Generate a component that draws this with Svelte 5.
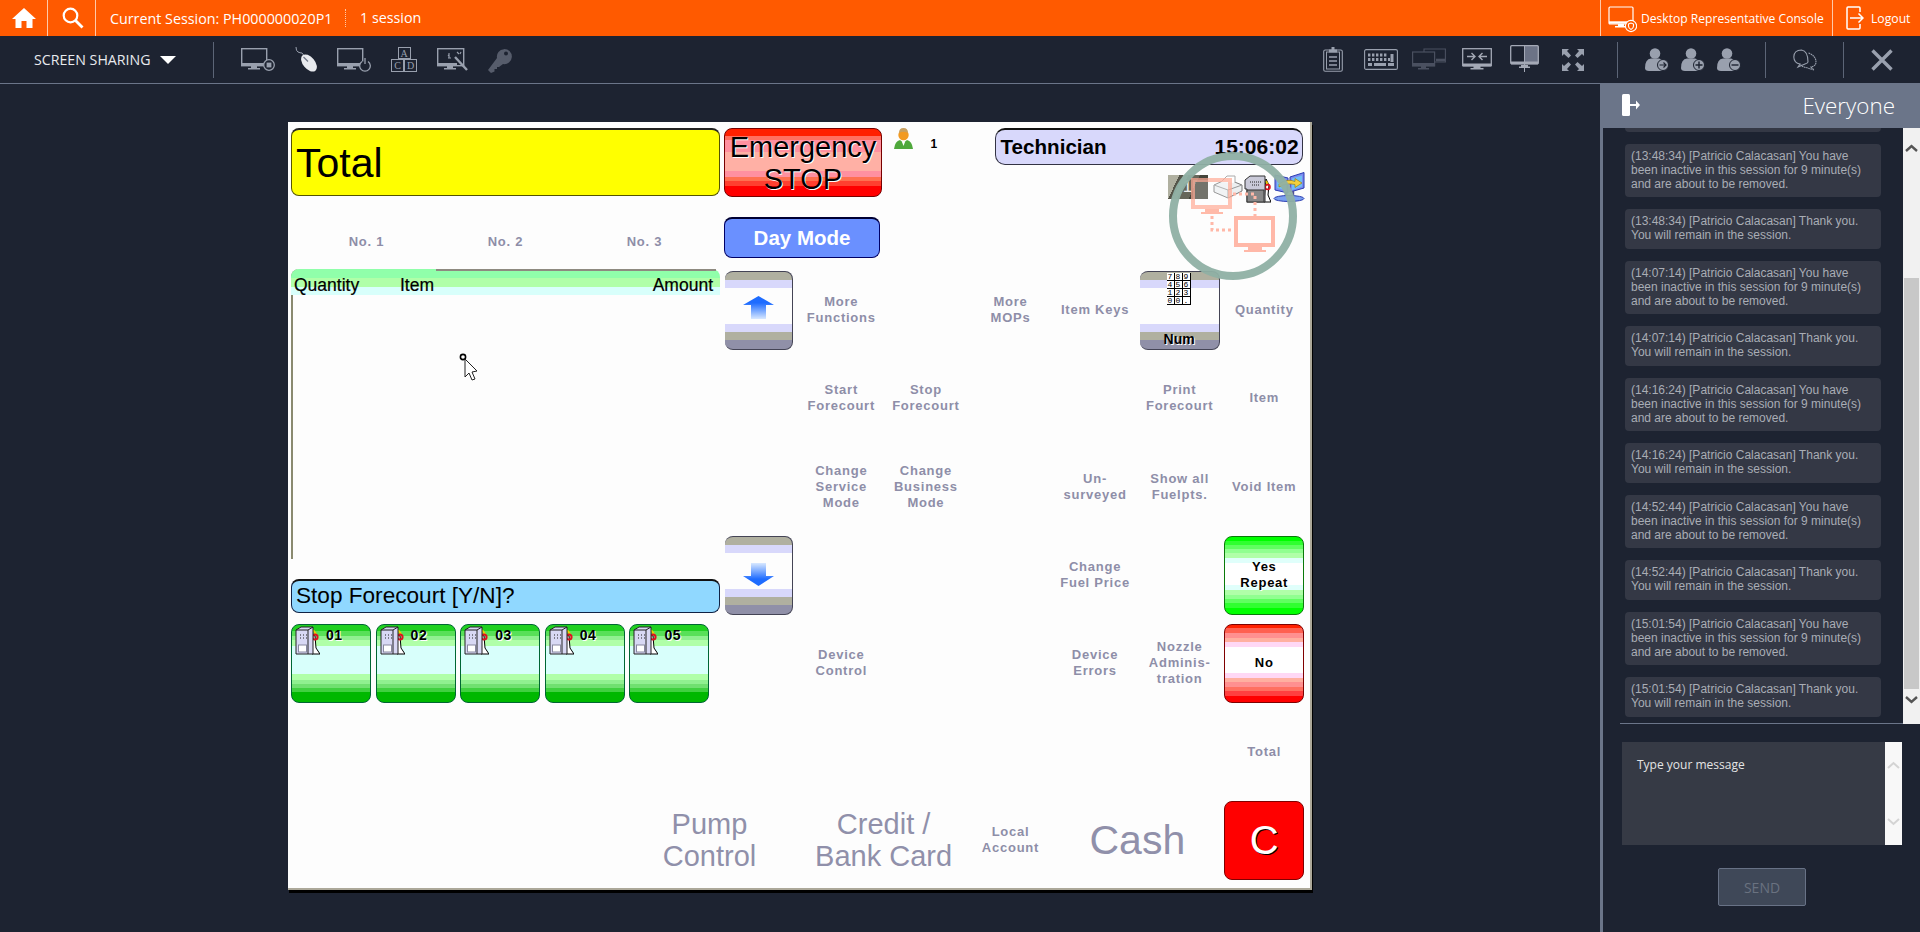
<script>
  const pumps = ['01', '02', '03', '04', '05'];
  const pad = ['7', '8', '9', '4', '5', '6', '1', '2', '3', '0', '0', '.'];

  // col 6..11 are the six key columns, row 5..11 the seven key rows
  const labels = [
    { text: 'More\nFunctions', col: 6, row: 5 },
    { text: 'More\nMOPs', col: 8, row: 5 },
    { text: 'Item Keys', col: 9, row: 5 },
    { text: 'Quantity', col: 11, row: 5 },
    { text: 'Start\nForecourt', col: 6, row: 6 },
    { text: 'Stop\nForecourt', col: 7, row: 6 },
    { text: 'Print\nForecourt', col: 10, row: 6 },
    { text: 'Item', col: 11, row: 6 },
    { text: 'Change\nService\nMode', col: 6, row: 7 },
    { text: 'Change\nBusiness\nMode', col: 7, row: 7 },
    { text: 'Un-\nsurveyed', col: 9, row: 7 },
    { text: 'Show all\nFuelpts.', col: 10, row: 7 },
    { text: 'Void Item', col: 11, row: 7 },
    { text: 'Change\nFuel Price', col: 9, row: 8 },
    { text: 'Device\nControl', col: 6, row: 9 },
    { text: 'Device\nErrors', col: 9, row: 9 },
    { text: 'Nozzle\nAdminis-\ntration', col: 10, row: 9 },
    { text: 'Total', col: 11, row: 10 },
    { text: 'Local\nAccount', col: 8, row: 11 }
  ];

  const messages = [
    ['13:48:34', 'long'], ['13:48:34', 'short'],
    ['14:07:14', 'long'], ['14:07:14', 'short'],
    ['14:16:24', 'long'], ['14:16:24', 'short'],
    ['14:52:44', 'long'], ['14:52:44', 'short'],
    ['15:01:54', 'long'], ['15:01:54', 'short']
  ];
</script>

<div class="app">
  <header class="topbar">
    <div class="cell home">
      <svg width="24" height="22" viewBox="0 0 24 22"><path d="M12 1 L24 12 H20.5 V21 H14.5 V14 H9.5 V21 H3.5 V12 H0 Z" fill="#fff"/></svg>
    </div>
    <div class="cell search">
      <svg width="22" height="22" viewBox="0 0 22 22" fill="none" stroke="#fff"><circle cx="8.5" cy="8.5" r="6.8" stroke-width="2.2"/><path d="M13.5 13.5 L20.5 20.5" stroke-width="2.8"/></svg>
    </div>
    <span class="session">Current Session: PH000000020P1</span>
    <span class="sessions">1 session</span>
    <div class="cell console">
      <svg width="29" height="30" viewBox="0 0 29 30" fill="none" stroke="#fff"><rect x="1" y="4" width="24" height="17" rx="1" stroke-width="1.2"/><path d="M1 19.5 H20" stroke-width="2.4"/><path d="M10 21 h6 v2 h3 v1.5 H7 V23 h3z" fill="#fff" stroke="none"/><circle cx="23" cy="23" r="5.6" fill="#ff5a00" stroke-width="1.1"/><path d="M20.5 21 l2.5-1 2.5 1 v2 q0 2.4-2.5 3.4 q-2.5-1-2.5-3.4z" fill="none" stroke-width="1.1"/></svg>
      <span>Desktop Representative Console</span>
    </div>
    <div class="cell logout">
      <svg width="18" height="24" viewBox="0 0 18 24" fill="none" stroke="#fff" stroke-width="1.5"><path d="M14 6 V2 Q14 1 13 1 H2 Q1 1 1 2 V22 Q1 23 2 23 H13 Q14 23 14 22 V18"/><path d="M4 12 H17 M12.5 7.5 L17 12 L12.5 16.5"/></svg>
      <span>Logout</span>
    </div>
  </header>

  <nav class="toolbar">
    <span class="sharing">SCREEN SHARING</span>
    <span class="caret"></span>
    <span class="vline"></span>
    <div class="tools tools-left">
      <svg width="34" height="24" viewBox="0 0 34 24" fill="none" stroke="#99a0ae"><rect x=".7" y=".7" width="25" height="17" stroke-width="1.4"/><path d="M1 16.5 H26" stroke-width="3"/><path d="M10 18 h6 v2 h3 v1.5 H7 V20 h3z" fill="#99a0ae" stroke="none"/><circle cx="28" cy="17" r="5.3" fill="#1d2331" stroke-width="1.3"/><rect x="25.6" y="14.6" width="4.8" height="4.8" fill="#99a0ae" stroke="none"/></svg>
      <svg width="22" height="25" viewBox="0 0 22 25" fill="none"><path d="M1 0 Q1 4 3 5 T7 6 Q8 7 8.5 8" stroke="#99a0ae" stroke-width="1"/><ellipse cx="14" cy="16" rx="6" ry="10" transform="rotate(-40 14 16)" fill="#e8eaee"/><path d="M8.5 10 L13 14.5" stroke="#707686" stroke-width="1.2"/></svg>
      <svg width="34" height="24" viewBox="0 0 34 24" fill="none" stroke="#99a0ae"><rect x=".7" y=".7" width="25" height="17" stroke-width="1.4"/><path d="M1 16.5 H26" stroke-width="3"/><path d="M10 18 h6 v2 h3 v1.5 H7 V20 h3z" fill="#99a0ae" stroke="none"/><path d="M25 13.5 A5.3 5.3 0 1 0 31 13.5" fill="#1d2331" stroke-width="1.3"/><path d="M28 10 V16" stroke-width="1.3"/></svg>
      <div class="blocks"><span class="a">A</span><span>C</span><span>D</span></div>
      <svg width="31" height="24" viewBox="0 0 31 24" fill="none" stroke="#99a0ae"><rect x=".7" y=".7" width="26" height="17" stroke-width="1.4"/><path d="M1 16.5 H20" stroke-width="3"/><path d="M10 18 h6 v2 h3 v1.5 H7 V20 h3z" fill="#99a0ae" stroke="none"/><path d="M18 9 L30 22" stroke-width="2.4"/><path d="M11 7 l1.5 1.5 M14 10 l-3 0 M12 5 v5 M20 4 l2 2 M24 4 l-1 2" stroke-width="1.1"/></svg>
      <svg width="26" height="26" viewBox="0 0 26 26"><path d="M9 11 A7.5 7.5 0 1 1 15 17 L11 20 H9 V22 H6.5 V24.5 L3 26 L0 23 Z" fill="#565c6b"/><circle cx="18" cy="6.5" r="2" fill="#1d2331"/></svg>
    </div>
    <div class="tools tools-right">
      <svg class="t-clip" width="20" height="25" viewBox="0 0 20 25" fill="none" stroke="#99a0ae"><rect x=".7" y="3" width="18.6" height="21.3" rx="1.5" stroke-width="1.1"/><rect x="3.5" y="5" width="13" height="17" stroke-width="1"/><path d="M6 2.5 h8 v3 H6z M8.5 0 h3 v3 h-3z" fill="#99a0ae" stroke="none"/><path d="M6 10 H14 M6 14 H14 M6 18 H14" stroke-width="1.4"/></svg>
      <svg class="t-keys" width="34" height="21" viewBox="0 0 34 21" fill="none" stroke="#99a0ae"><rect x=".6" y=".6" width="32.8" height="19.8" rx="1.5" stroke-width="1.1"/><path d="M4 6 H24" stroke-width="3" stroke-dasharray="2.4 1.6"/><path d="M4 10.5 H26" stroke-width="3" stroke-dasharray="2.4 1.6"/><path d="M10 15.5 H22" stroke-width="3"/><path d="M4 15.5 H8 M24 15.5 H30 M28 5 V13" stroke-width="3"/></svg>
      <svg class="t-dual" width="34" height="23" viewBox="0 0 34 23" fill="none" stroke="#4a5060"><path d="M12 4 V1 H33.4 V14 H23" stroke-width="1.1"/><path d="M24 12 H33" stroke-width="2.6"/><rect x=".6" y="4" width="22" height="14" stroke-width="1.2"/><path d="M1 16.5 H22" stroke-width="3"/><path d="M9 18 h5 v2 h3 v1.5 H6 V20 h3z" fill="#4a5060" stroke="none"/></svg>
      <svg class="t-join" width="30" height="23" viewBox="0 0 30 23" fill="none" stroke="#a4a9b6"><rect x=".7" y=".7" width="28.6" height="17" stroke-width="1.3"/><path d="M1 17 H29" stroke-width="3"/><path d="M11.5 18 h7 v2 h3 v1.5 H8.5 V20 h3z" fill="#a4a9b6" stroke="none"/><path d="M5 8.5 H13 M9.5 5 L13 8.5 L9.5 12 M25 8.5 H17 M20.5 5 L17 8.5 L20.5 12" stroke-width="1.4"/></svg>
      <svg class="t-half" width="29" height="27" viewBox="0 0 29 27" fill="none" stroke="#a4a9b6"><rect x="14.5" y="1" width="14" height="18" fill="#6c7386" stroke="none"/><rect x=".7" y=".7" width="27.6" height="18" rx="1" stroke-width="1.3"/><path d="M1 18 H28" stroke-width="3"/><path d="M14.5 0 V27" stroke-width="1"/><path d="M11 20 h7 v1.5 h2 v1.5 H9 v-1.5 h2z" fill="#a4a9b6" stroke="none"/></svg>
      <svg class="t-full" width="22" height="22" viewBox="0 0 22 22" fill="#99a0ae"><path d="M0 0 H7 L5 2 L9 6.5 L6.5 9 L2 5 L0 7Z M22 0 H15 L17 2 L13 6.5 L15.5 9 L20 5 L22 7Z M0 22 H7 L5 20 L9 15.5 L6.5 13 L2 17 L0 15Z M22 22 H15 L17 20 L13 15.5 L15.5 13 L20 17 L22 15Z"/></svg>
      <span class="vline t-line1"></span>
      <svg class="t-u1" width="24" height="23" viewBox="0 0 24 23" fill="#99a0ae"><circle cx="10" cy="5.5" r="5.3"/><path d="M0 20 Q0 11 6 10.5 H14 Q19 11 19 20 L17 23 H4 Q0 23 0 20Z"/><circle cx="18" cy="17" r="5.5" fill="#99a0ae" stroke="#1d2331" stroke-width="1"/><path d="M14.5 17 H21 M18.5 14.5 L21 17 L18.5 19.5" stroke="#1d2331" fill="none" stroke-width="1.2"/></svg>
      <svg class="t-u2" width="24" height="23" viewBox="0 0 24 23" fill="#99a0ae"><circle cx="10" cy="5.5" r="5.3"/><path d="M0 20 Q0 11 6 10.5 H14 Q19 11 19 20 L17 23 H4 Q0 23 0 20Z"/><circle cx="18" cy="17" r="5.5" fill="#99a0ae" stroke="#1d2331" stroke-width="1"/><path d="M14.5 17 H21.5 M18 13.5 V20.5" stroke="#1d2331" fill="none" stroke-width="1.4"/></svg>
      <svg class="t-u3" width="24" height="23" viewBox="0 0 24 23" fill="#99a0ae"><circle cx="10" cy="5.5" r="5.3"/><path d="M0 20 Q0 11 6 10.5 H14 Q19 11 19 20 L17 23 H4 Q0 23 0 20Z"/><circle cx="18" cy="17" r="5.5" fill="#99a0ae" stroke="#1d2331" stroke-width="1"/><path d="M14.5 17 H21.5" stroke="#1d2331" fill="none" stroke-width="1.4"/></svg>
      <span class="vline t-line2"></span>
      <svg class="t-chat" width="24" height="22" viewBox="0 0 24 22" fill="none" stroke="#99a0ae" stroke-width="1.1"><path d="M15 13 Q15 2 8.5 1 Q1 1 .8 8 Q1 14 7 15 L5 18 L12 15 Q15 14 15 13Z"/><path d="M15.5 4 Q23 7 23 13 Q23 17 18 18 L21 21 L13 18.5 Q9 18 7.5 15.5" stroke-dasharray="1.6 .6"/></svg>
      <span class="vline t-line3"></span>
      <svg class="t-x" width="22" height="22" viewBox="0 0 22 22" stroke="#99a0ae" stroke-width="3.4"><path d="M1.5 1.5 L20.5 20.5 M20.5 1.5 L1.5 20.5"/></svg>
    </div>
  </nav>

  <main class="main">
    <section class="stage">
      <div class="screen">
        <div class="pos-left">
          <div class="total">Total</div>
          <div class="numbers"><span>No. 1</span><span>No. 2</span><span>No. 3</span></div>
          <div class="list">
            <div class="list-head"><span class="q">Quantity</span><span class="i">Item</span><span class="am">Amount</span></div>
          </div>
          <div class="status">Stop Forecourt [Y/N]?</div>
          <div class="pumps">
            {#each pumps as p}
              <div class="pump">
                <svg width="25" height="29" viewBox="0 0 25 29"><path d="M17 8 L20 10 L21 22 L25 28 H17Z" fill="#fff" stroke="#000"/><path d="M18 4 L21 8" stroke="#f0d000" stroke-width="2"/><circle cx="20" cy="11" r="2.6" fill="none" stroke="#e01020" stroke-width="2"/><path d="M1 4 L6 1 H18 V28 H1Z" fill="#d8d8f4" stroke="#222"/><path d="M1 4 H13 L18 1 M13 4 V28" fill="none" stroke="#222"/><path d="M5 9 h1 m2 0 h1 m2 0 h1 M5 12 h1 m2 0 h1 m2 0 h1" stroke="#222"/><rect x="3.5" y="19" width="8" height="7" fill="#fff" stroke="#8888a0"/></svg>
                <span>{p}</span>
              </div>
            {/each}
          </div>
        </div>

        <div class="emergency">Emergency<br>STOP</div>
        <div class="daymode">Day Mode</div>

        <div class="user">
          <svg width="19" height="23" viewBox="0 0 19 23"><path d="M0 22 Q1 14 6 13 L9.5 16 L13 13 Q18 14 19 22Z" fill="#4fa83c"/><circle cx="9.5" cy="8" r="5.2" fill="#f29a22"/><path d="M5 6 Q5 1 9.5 1 Q14 1 14 6 Q9.5 3.5 5 6Z" fill="#c8a060"/><path d="M8 15 h3 l-1.5 4z" fill="#fff"/></svg>
          <b>1</b>
        </div>

        <div class="info">
          <div class="tech"><span>Technician</span><span class="clock">15:06:02</span></div>
          <div class="tray">
            <span class="badge">1</span>
            <svg width="30" height="24" viewBox="0 0 30 24"><path d="M1 10 L14 4 L29 10 V16 L15 23 L1 17Z" fill="#eceff0" stroke="#777"/><path d="M1 10 L15 15 L29 10 M15 15 V23" fill="none" stroke="#999"/><path d="M8 7 L14 1 H22 V8" fill="#fff" stroke="#aaa"/></svg>
            <svg width="27" height="28" viewBox="0 0 27 28"><path d="M22 4 L25 10 L24 20 L27 27 H20Z" fill="#fff" stroke="#000"/><path d="M22 6 L24 10" stroke="#e8c800" stroke-width="2"/><circle cx="23.5" cy="12" r="2.4" fill="none" stroke="#e01020" stroke-width="1.8"/><path d="M1 5 L6 1 H21 V27 H3 V14 H1Z" fill="#c9c9d8" stroke="#333"/><rect x="3" y="15" width="17" height="12" fill="#888" stroke="#333"/><path d="M6 7 h11 M8 10 h8" stroke="#222" stroke-dasharray="1 1"/></svg>
            <svg class="net" width="32" height="30" viewBox="0 0 32 30"><path d="M2 3 L15 6 V21 L2 18Z" fill="#7d8cf0" stroke="#2a3cb0"/><path d="M4 5.5 L13 7.5 V18.5 L4 16Z" fill="#6fc0f4"/><path d="M17 5 L31 0.5 V16 L17 20Z" fill="#7d8cf0" stroke="#2a3cb0"/><path d="M19 6.5 L29 3.5 V14.5 L19 18Z" fill="#6fc0f4"/><path d="M13 20 V26 M20 19 V26" stroke="#50509a" stroke-width="2.4"/><ellipse cx="16" cy="26.5" rx="15" ry="3" fill="#7aa0f0" stroke="#2a3cb0"/><path d="M6 12 Q14 6 22 9.5 V6.5 L29 11 L22 15.5 V12.5 Q14 10.5 6 15Z" fill="#f4cf3c" stroke="#8a7010" stroke-width=".6"/></svg>
          </div>
        </div>

        <button class="key grey up">
          <svg width="31" height="23" viewBox="0 0 31 23"><defs><linearGradient id="upg" x1="0" y1="0" x2="0" y2="1"><stop offset=".3" stop-color="#1e6cff"/><stop offset="1" stop-color="#d8e8ff"/></linearGradient></defs><path d="M15.5 0 L31 9 H23 V23 H8 V9 H0Z" fill="url(#upg)"/></svg>
        </button>
        <button class="key grey down">
          <svg width="31" height="23" viewBox="0 0 31 23"><defs><linearGradient id="dng" x1="0" y1="1" x2="0" y2="0"><stop offset=".3" stop-color="#1e6cff"/><stop offset="1" stop-color="#d8e8ff"/></linearGradient></defs><path d="M15.5 23 L31 13 H23 V0 H8 V13 H0Z" fill="url(#dng)"/></svg>
        </button>
        <button class="key grey num">
          <div class="pad">{#each pad as d}<i>{d}</i>{/each}</div>
          <span>Num</span>
        </button>

        {#each labels as l}
          <div class="label" style="grid-column:{l.col};grid-row:{l.row}">{l.text}</div>
        {/each}

        <button class="key yes">Yes<br>Repeat</button>
        <button class="key no">No</button>
        <button class="key clear">C</button>

        <div class="big pump-ctl">Pump<br>Control</div>
        <div class="big credit">Credit /<br>Bank Card</div>
        <div class="cash">Cash</div>

        <svg class="overlay" width="136" height="136" viewBox="0 0 136 136" fill="none">
          <circle cx="68" cy="68" r="60" stroke="#8fb0a4" stroke-opacity=".95" stroke-width="8"/>
          <path d="M28 32 H65 V59 H28Z" fill="#fff" fill-opacity=".25" stroke="#ffa994" stroke-opacity=".7" stroke-width="4"/>
          <path d="M40 61 H54 V64 H58 V66 H36 V64 H40Z" fill="#ffa994" fill-opacity=".8"/>
          <path d="M71 70 H108 V97 H71Z" fill="#fff" fill-opacity=".4" stroke="#ffb8a8" stroke-width="4"/>
          <path d="M83 99 H97 V102 H101 V104 H79 V102 H83Z" fill="#ffb8a8"/>
          <path d="M47 68 V82 H66 M68 46 H90 V68" stroke="#ffb8a8" stroke-width="3" stroke-dasharray="3 3"/>
        </svg>

        <svg class="cursor" width="20" height="30" viewBox="0 0 20 30" fill="none"><circle cx="4" cy="4" r="2.6" stroke="#000" stroke-width="1.6"/><path d="M6 6 L6 24 L10 20 L13 27 L16 26 L13 19 L18 18Z" fill="#fff" stroke="#222"/></svg>
      </div>
    </section>

    <aside class="side">
      <div class="side-head">
        <svg width="18" height="22" viewBox="0 0 18 22" fill="#fff"><rect x="0" y="0" width="8" height="22" rx="1.5"/><path d="M8 10 H14 V6.5 L18 11 L14 15.5 V12 H8Z"/></svg>
        <span>Everyone</span>
      </div>
      <div class="chat">
        <div class="messages">
          <div class="sliver"></div>
          {#each messages as m}
            {#if m[1] === 'long'}
              <p>({m[0]}) [Patricio Calacasan] You have been inactive in this session for 9 minute(s) and are about to be removed.</p>
            {:else}
              <p>({m[0]}) [Patricio Calacasan] Thank you. You will remain in the session.</p>
            {/if}
          {/each}
        </div>
        <div class="bar">
          <svg width="13" height="8" viewBox="0 0 13 8" fill="none" stroke="#555" stroke-width="2.4"><path d="M1 7 L6.5 2 L12 7"/></svg>
          <span class="thumb"></span>
          <svg width="13" height="8" viewBox="0 0 13 8" fill="none" stroke="#555" stroke-width="2.4"><path d="M1 1 L6.5 6 L12 1"/></svg>
        </div>
      </div>
      <div class="compose">
        <div class="input">Type your message</div>
        <div class="input-bar">
          <svg width="13" height="8" viewBox="0 0 13 8" fill="none" stroke="#d4d4d4" stroke-width="2"><path d="M1 7 L6.5 2 L12 7"/></svg>
          <svg width="13" height="8" viewBox="0 0 13 8" fill="none" stroke="#d4d4d4" stroke-width="2"><path d="M1 1 L6.5 6 L12 1"/></svg>
        </div>
      </div>
      <button class="send">SEND</button>
    </aside>
  </main>
</div>

<style>
  :global(body) {
    background: #1d2331;
    overflow: hidden;
  }

  .app {
    width: 1920px;
    height: 932px;
    display: flex;
    flex-direction: column;
    font-family: 'Open Sans', sans-serif;
    color: #fff;
  }

  /* orange bar */
  .topbar {
    height: 36px;
    background: #ff5a00;
    display: flex;
    align-items: center;
    font-size: 14.3px;
  }

  .cell {
    height: 100%;
    display: flex;
    align-items: center;
    box-sizing: border-box;
  }

  .home {
    width: 48px;
    padding-left: 12px;
    border-right: 1px solid #ffc9a8;
  }

  .search {
    width: 48px;
    padding-left: 14px;
    border-right: 1px solid #ffc9a8;
  }

  .session {
    margin-left: 14px;
    width: 235px;
    white-space: nowrap;
  }

  .sessions {
    border-left: 1px dotted #ffc9a8;
    padding-left: 14px;
    line-height: 18px;
  }

  .console {
    margin-left: auto;
    width: 232px;
    padding-left: 7px;
    gap: 4px;
    border-left: 1px solid #ffc9a8;
    font-size: 12.1px;
    white-space: nowrap;
  }

  .logout {
    width: 88px;
    padding-left: 13px;
    gap: 7px;
    border-left: 1px solid #ffc9a8;
    font-size: 12.2px;
  }

  /* toolbar */
  .toolbar {
    height: 48px;
    box-sizing: border-box;
    border-bottom: 1px solid #6b7589;
    display: flex;
    align-items: center;
    padding-left: 34px;
  }

  .sharing {
    font-size: 14.2px;
    color: #e8eaee;
    width: 126px;
    white-space: nowrap;
  }

  .caret {
    border-left: 8px solid transparent;
    border-right: 8px solid transparent;
    border-top: 8px solid #fff;
    margin-right: 37px;
  }

  .vline {
    width: 1px;
    height: 36px;
    background: #5c6577;
    flex: none;
  }

  .tools {
    display: flex;
    align-items: center;
  }

  .tools-left {
    margin-left: 27px;
    gap: 20px;
  }

  .blocks {
    width: 26px;
    display: grid;
    grid-template-columns: 13px 13px;
    grid-template-rows: 12px 13px;
    font: 10px 'Liberation Serif', serif;
    color: #99a0ae;
    text-align: center;
    line-height: 11px;
  }

  .blocks span {
    border: 1px solid #99a0ae;
    box-sizing: border-box;
  }

  .blocks .a {
    grid-column: 1 / 3;
    justify-self: center;
    width: 13px;
  }

  .tools-right {
    margin-left: auto;
    padding-right: 27px;
  }

  .t-keys { margin-left: 21px; }
  .t-dual { margin-left: 14px; }
  .t-join { margin-left: 16px; }
  .t-half { margin-left: 18px; margin-top: -3px; }
  .t-full { margin-left: 23px; }
  .t-line1 { margin-left: 33px; }
  .t-u1 { margin-left: 27px; }
  .t-u2 { margin-left: 12px; }
  .t-u3 { margin-left: 12px; }
  .t-line2 { margin-left: 24px; }
  .t-chat { margin-left: 27px; }
  .t-line3 { margin-left: 26px; }
  .t-x { margin-left: 27px; }

  /* main area */
  .main {
    flex: 1;
    display: flex;
    min-height: 0;
  }

  .stage {
    width: 1600px;
    padding: 38px 0 0 288px;
    box-sizing: border-box;
  }

  /* the remote POS screen, a key grid of 85 x 88 cells */
  .screen {
    position: relative;
    width: 1024px;
    height: 768px;
    box-sizing: border-box;
    background: #fdfdfd;
    border-right: 2px solid #aca899;
    border-bottom: 2px solid #aca899;
    box-shadow: 1px 3px 0 #000;
    padding: 6px 0 0 3px;
    display: grid;
    grid-template-columns: 329px 100px 5px 68px 6px repeat(6, 84.6px);
    grid-template-rows: 68px 21px 41px 8px repeat(7, 88.33px);
    font-family: 'Liberation Sans', Arial, sans-serif;
    color: #000;
  }

  .pos-left {
    grid-column: 1 / 3;
    grid-row: 1 / 10;
    display: flex;
    flex-direction: column;
  }

  .total {
    height: 68px;
    box-sizing: border-box;
    background: #ffff00;
    border: 1px solid #555500;
    border-top: 2px solid #222;
    border-radius: 8px;
    font-size: 41px;
    line-height: 66px;
    padding-left: 4px;
  }

  .numbers {
    height: 73px;
    box-sizing: border-box;
    padding: 38px 0 0 6px;
    display: grid;
    grid-template-columns: repeat(3, 139px);
    justify-items: center;
    align-items: start;
    font-size: 13px;
    font-weight: bold;
    letter-spacing: .75px;
    line-height: 16px;
    color: #8e8ea8;
  }

  .list {
    height: 290px;
    box-sizing: border-box;
    border-left: 2px solid #8a8a70;
    border-top-left-radius: 8px;
  }

  .list-head {
    position: relative;
    height: 26px;
    margin-left: -2px;
    border-radius: 8px 8px 0 0;
    background: linear-gradient(#90ffaa 0 9px, #b0ffa8 9px 18px, #d8fffb 18px);
    font-size: 17.5px;
    line-height: 33px;
    white-space: nowrap;
    -webkit-text-stroke: .2px #000;
  }

  .list-head::before {
    content: '';
    position: absolute;
    left: 145px;
    right: 4px;
    top: 0;
    height: 2px;
    background: #8e8a80;
  }

  .list-head span {
    position: absolute;
    top: 0;
  }

  .q { left: 3px; }
  .i { left: 109px; }
  .am { right: 7px; }

  .status {
    margin-top: 20px;
    height: 34px;
    box-sizing: border-box;
    background: #90d8ff;
    border: 1px solid #124;
    border-top: 2px solid #111;
    border-radius: 8px;
    font-size: 22.6px;
    line-height: 30px;
    padding-left: 4px;
    white-space: nowrap;
  }

  .pumps {
    margin-top: 11px;
    display: flex;
    gap: 4.6px;
  }

  .pump {
    width: 80px;
    height: 79px;
    box-sizing: border-box;
    border: 1px solid #063;
    border-radius: 8px;
    background: linear-gradient(#20d020 0 6px, #58e058 6px 11px, #90f090 11px 15px, #b0ffa8 15px 21px, #d8fffb 21px 49px, #b0ffa8 49px 55px, #90f090 55px 59px, #70e070 59px 63px, #40d040 63px 67px, #00b800 67px);
    display: flex;
    padding: 1px 0 0 3px;
    font-size: 14px;
    font-weight: bold;
    text-shadow: 1px 1px 0 #fff;
  }

  .pump svg {
    flex: none;
  }

  .pump span {
    margin: 1px 0 0 6px;
    letter-spacing: .5px;
  }

  .emergency {
    grid-column: 4 / 7;
    grid-row: 1;
    width: 158px;
    height: 69px;
    margin-left: -1px;
    box-sizing: border-box;
    border: 1px solid #700;
    border-radius: 8px;
    background: linear-gradient(#ff2000 0 7px, #ff7060 7px 11px, #ff90a0 11px 23px, #ffb0a5 23px 42px, #ff90a0 42px 48px, #ff7050 48px 52px, #ff4030 52px 57px, #ff0000 57px);
    font-size: 29px;
    line-height: 32px;
    text-align: center;
    padding-top: 2px;
    text-shadow: 1px 1px 0 #fff;
    white-space: nowrap;
  }

  .daymode {
    grid-column: 4 / 7;
    grid-row: 3;
    width: 156px;
    margin-left: -1px;
    box-sizing: border-box;
    background: #6a90ff;
    border: 1px solid #000066;
    border-top: 2px solid #000033;
    border-radius: 8px;
    color: #fff;
    font-size: 20.5px;
    font-weight: bold;
    line-height: 37px;
    text-align: center;
  }

  .user {
    grid-column: 7;
    grid-row: 1;
    display: flex;
    align-items: flex-start;
    padding-left: 10px;
    font-size: 12px;
  }

  .user svg {
    margin-top: -1px;
  }

  .user b {
    margin: 9px 0 0 18px;
  }

  .info {
    grid-column: 8 / 12;
    grid-row: 1 / 4;
    display: flex;
    flex-direction: column;
    align-items: flex-end;
  }

  .tech {
    width: 308px;
    height: 37px;
    margin-right: 4px;
    box-sizing: border-box;
    background: #d8d8fb;
    border: 1px solid #334;
    border-top: 2px solid #111;
    border-radius: 10px;
    display: flex;
    justify-content: space-between;
    padding: 0 3px 0 5px;
    font-size: 20.6px;
    font-weight: bold;
    line-height: 33px;
  }

  .clock {
    font-size: 21px;
  }

  .tray {
    margin-top: 10px;
    margin-right: 2px;
    display: flex;
    align-items: flex-start;
    gap: 1.5px;
  }

  .net {
    margin-top: -3px;
  }

  .badge {
    width: 40px;
    height: 24px;
    margin-right: 3.5px;
    background: linear-gradient(115deg, #b0b0a0 0 22%, #55554a 22% 30%, #a8a898 30% 40%, #66665a 40% 62%, #44443a 62%);
    color: #eee;
    font: 17px/24px 'Liberation Sans', sans-serif;
    text-align: center;
  }

  .key {
    place-self: center;
    width: 80px;
    height: 79px;
    padding: 0;
    box-sizing: border-box;
    border-radius: 8px;
    font-family: inherit;
    font-size: 13px;
    font-weight: bold;
    letter-spacing: .75px;
    line-height: 16px;
    color: #000;
    text-shadow: 1px 1px 0 #fff;
  }

  .grey {
    background: linear-gradient(#b0b0a0 0 8px, #d8d8fb 8px 16px, #fdfdfd 16px 52px, #d8d8fb 52px 60px, #b0b0a0 60px 68px, #9090a8 68px);
    border: 1px solid #445;
    border-left: 0;
  }

  .up, .down {
    grid-column: 4;
    width: 68px;
    justify-self: start;
    display: flex;
    align-items: center;
    justify-content: center;
  }

  .up {
    grid-row: 5;
    padding-bottom: 5px;
  }

  .down {
    grid-row: 8;
    padding-bottom: 2px;
  }

  .num {
    grid-column: 10;
    grid-row: 5;
    position: relative;
  }

  .num span {
    position: absolute;
    left: 0;
    right: 0;
    bottom: 2px;
    font-size: 14px;
    letter-spacing: 0;
  }

  .pad {
    position: absolute;
    top: 1px;
    left: 27px;
    display: grid;
    grid-template-columns: repeat(3, 8px);
    grid-auto-rows: 8px;
    background: #fff;
    text-shadow: none;
  }

  .pad i {
    font: 8px/8px 'Liberation Mono', monospace;
    text-align: center;
    border-right: 1px solid #000;
    border-bottom: 1px solid #000;
    box-sizing: border-box;
  }

  .label {
    place-self: center;
    font-size: 13px;
    font-weight: bold;
    letter-spacing: .75px;
    line-height: 16px;
    color: #8e8ea8;
    text-align: center;
    white-space: pre-line;
  }

  .yes {
    grid-column: 11;
    grid-row: 8;
    background: linear-gradient(#00ff00 0 4px, #30ff30 4px 8px, #60ff60 8px 12px, #90ff90 12px 16px, #b0ffa8 16px 21px, #e0fffb 21px 26px, #fff 26px 48px, #e0fffb 48px 53px, #b0ffa8 53px 58px, #90ff90 58px 62px, #60ff60 62px 66px, #30ff30 66px 71px, #00ff00 71px);
    border: 1px solid #0a7a0a;
  }

  .no {
    grid-column: 11;
    grid-row: 9;
    background: linear-gradient(#ff2000 0 3px, #ff6050 3px 8px, #ff9090 8px 13px, #ffb0a0 13px 17px, #ffd8f5 17px 22px, #fff 22px 48px, #ffd8f5 48px 53px, #ffb0a0 53px 57px, #ff9090 57px 62px, #ff7060 62px 66px, #ff4040 66px 71px, #ff0000 71px);
    border: 1px solid #800000;
  }

  .clear {
    grid-column: 11;
    grid-row: 11;
    background: #ff0000;
    border: 1px solid #800000;
    color: #fff;
    font-size: 40px;
    font-weight: normal;
    letter-spacing: 0;
    text-shadow: 1px 1px 0 #000;
  }

  .big {
    place-self: center;
    grid-row: 11;
    font-size: 29px;
    line-height: 32px;
    color: #9090aa;
    text-align: center;
    white-space: nowrap;
  }

  .pump-ctl { grid-column: 2 / 6; }
  .credit { grid-column: 6 / 8; }

  .cash {
    grid-column: 9 / 11;
    grid-row: 11;
    place-self: center;
    font-size: 41px;
    color: #9090aa;
    padding-top: 1px;
  }

  .overlay {
    position: absolute;
    left: 877px;
    top: 26px;
    pointer-events: none;
  }

  .cursor {
    position: absolute;
    left: 171px;
    top: 231px;
  }

  /* chat side panel */
  .side {
    width: 320px;
    box-sizing: border-box;
    border-left: 3px solid #6b7589;
    display: flex;
    flex-direction: column;
  }

  .side-head {
    height: 44px;
    box-sizing: border-box;
    margin-left: -3px;
    background: #6b7589;
    display: flex;
    align-items: center;
    justify-content: space-between;
    padding: 0 25px 2px 22px;
    font-size: 22.4px;
    font-weight: 300;
  }

  .chat {
    height: 596px;
    display: flex;
  }

  .messages {
    width: 283px;
    margin-left: 17px;
    box-sizing: border-box;
    overflow: hidden;
    padding: 0 22px 0 5px;
    border-bottom: 1px solid #6b7589;
    display: flex;
    flex-direction: column;
    gap: 12px;
  }

  .sliver {
    height: 4px;
    flex: none;
    background: #343845;
    border-radius: 0 0 4px 4px;
  }

  .messages p {
    margin: 0;
    padding: 6px;
    flex: none;
    background: #343845;
    border-radius: 4px;
    font: 12px/13.8px 'Liberation Sans', Arial, sans-serif;
    color: #a9adb5;
  }

  .bar {
    width: 17px;
    background: #f1f1f1;
    display: flex;
    flex-direction: column;
    align-items: center;
    padding-top: 16px;
    box-sizing: border-box;
  }

  .thumb {
    width: 15px;
    height: 411px;
    background: #c8c8c8;
    margin: 126px 0 7px;
  }

  .compose {
    margin: 18px 0 0 19px;
    width: 280px;
    height: 103px;
    display: flex;
  }

  .input {
    flex: 1;
    background: #363a45;
    padding: 15px;
    font-size: 12px;
    line-height: 16px;
    color: #e4e4e4;
  }

  .input-bar {
    width: 17px;
    background: #f8f8f8;
    display: flex;
    flex-direction: column;
    align-items: center;
    justify-content: space-between;
    padding: 19px 0 19px;
    box-sizing: border-box;
  }

  .send {
    margin: 23px 0 0 115px;
    width: 88px;
    height: 38px;
    background: #3f4858;
    border: 1px solid #687286;
    border-radius: 2px;
    font: 14px 'Open Sans', sans-serif;
    color: #6a7280;
  }
</style>
